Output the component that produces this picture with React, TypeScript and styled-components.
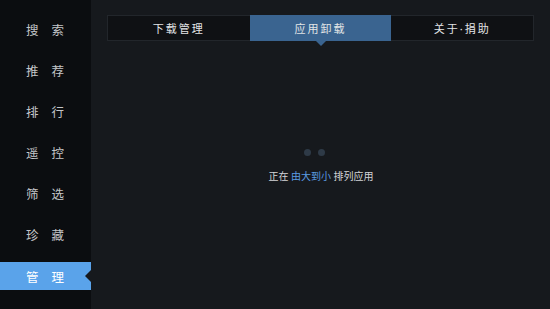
import React from 'react';
import styled, { createGlobalStyle } from 'styled-components';

const GlobalStyle = createGlobalStyle`
  html, body {
    margin: 0;
    padding: 0;
    background: #16191d;
  }
  body {
    font-family: "Noto Sans", "Noto Sans CJK SC", sans-serif;
  }
`;

const menu = ['搜索', '推荐', '排行', '遥控', '筛选', '珍藏', '管理'];
const tabs = ['下载管理', '应用卸载', '关于·捐助'];

const Screen = styled.div`
  display: flex;
  width: 550px;
  height: 309px;
  overflow: hidden;
  background: #16191d;
`;

const Sidebar = styled.nav`
  width: 91px;
  flex-shrink: 0;
  background: #0b0d10;
  display: flex;
  flex-direction: column;
  padding-top: 15px;
`;

const MenuItem = styled.div<{ $active?: boolean }>`
  position: relative;
  height: 28px;
  margin-bottom: 13.2px;
  display: flex;
  align-items: center;
  justify-content: center;
  padding-right: 1px;
  font-size: 12.5px;
  letter-spacing: 13px;
  text-indent: 13px;
  color: ${(p) => (p.$active ? '#ffffff' : '#c4c6c9')};
  background: ${(p) => (p.$active ? '#5aa3ea' : 'transparent')};

  &::after {
    content: '';
    display: ${(p) => (p.$active ? 'block' : 'none')};
    position: absolute;
    right: 0;
    top: 50%;
    transform: translateY(-50%);
    border-style: solid;
    border-width: 6px 6px 6px 0;
    border-color: transparent #16191d transparent transparent;
  }
`;

const Main = styled.main`
  flex: 1;
  display: flex;
  flex-direction: column;
  padding: 15px 16px 0 16px;
`;

const TabBar = styled.div`
  display: flex;
  height: 24px;
  border: 1px solid #22262b;
  background: #0f1114;
`;

const Tab = styled.div<{ $active?: boolean }>`
  position: relative;
  flex: 1;
  display: flex;
  align-items: center;
  justify-content: center;
  padding-bottom: 1px;
  font-size: 11px;
  letter-spacing: 2px;
  color: #e2e4e6;
  background: ${(p) => (p.$active ? '#3a6490' : 'transparent')};
  margin: ${(p) => (p.$active ? '-1px 0' : '0')};

  &::after {
    content: '';
    display: ${(p) => (p.$active ? 'block' : 'none')};
    position: absolute;
    left: 50%;
    bottom: -5px;
    transform: translateX(-50%);
    border-style: solid;
    border-width: 5px 5px 0 5px;
    border-color: #3a6490 transparent transparent transparent;
  }
`;

const Body = styled.div`
  display: flex;
  flex-direction: column;
  align-items: center;
  padding-top: 108px;
  padding-left: 1px;
`;

const Dots = styled.div`
  display: flex;
  gap: 7px;
  margin-right: 14px;
`;

const Dot = styled.span`
  width: 7px;
  height: 7px;
  border-radius: 50%;
  background: #2e3a47;
`;

const Status = styled.div`
  margin-top: 12px;
  font-size: 10px;
  color: #d3d5d8;
`;

const Highlight = styled.span`
  color: #5b9ce2;
`;

export default function App() {
  return (
    <>
      <GlobalStyle />
      <Screen>
        <Sidebar>
          {menu.map((m) => (
            <MenuItem key={m} $active={m === '管理'}>
              {m}
            </MenuItem>
          ))}
        </Sidebar>
        <Main>
          <TabBar>
            {tabs.map((t) => (
              <Tab key={t} $active={t === '应用卸载'}>
                {t}
              </Tab>
            ))}
          </TabBar>
          <Body>
            <Dots>
              <Dot />
              <Dot />
            </Dots>
            <Status>
              正在 <Highlight>由大到小</Highlight> 排列应用
            </Status>
          </Body>
        </Main>
      </Screen>
    </>
  );
}
